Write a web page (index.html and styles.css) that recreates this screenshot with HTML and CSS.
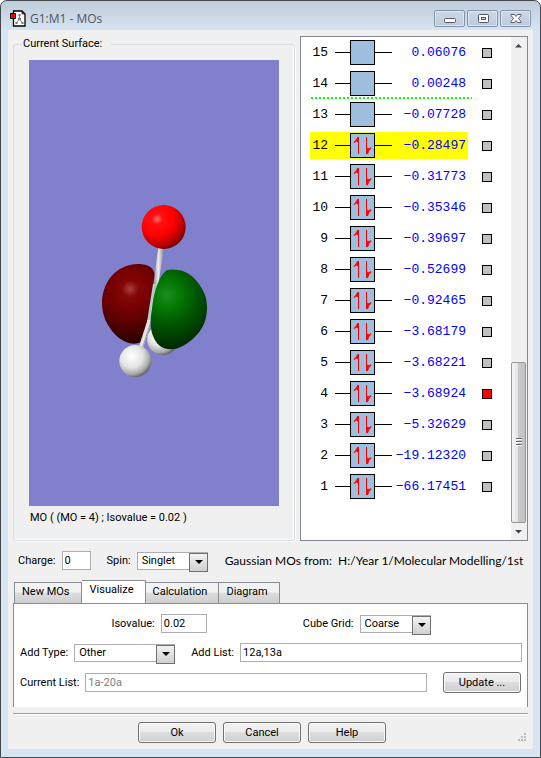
FILE: index.html
```
<!DOCTYPE html>
<html lang="en">
<head>
<meta charset="utf-8">
<title>G1:M1 - MOs</title>
<link rel="stylesheet" href="styles.css">
</head>
<body>
<svg class="defs" aria-hidden="true">
  <symbol id="empty" viewBox="0 0 57 25">
    <path d="M0 12.5h16M40 12.5h17" stroke="#000" fill="none"/>
    <rect x="15.5" y=".5" width="24" height="24" fill="#a0bede" stroke="#000"/>
  </symbol>
  <symbol id="pair" viewBox="0 0 57 25">
    <use href="#empty"/>
    <path d="M23 4h1v17h-1zM31 4h1v17h-1z" fill="red"/>
    <path d="M23 4v5h-1v-1l-2 1-1 1V9l2-2 1-2zM32 21v-6l2 .5 2-1v1l-2 2-1 3z" fill="red" stroke="red" stroke-width=".5"/>
  </symbol>
</svg>
<main class="window">
  <header class="titlebar">
    <svg class="app-icon" width="16" height="17" viewBox="0 0 16 17">
      <path d="M3.500 1H12l3 3v12H3.500z" fill="#fff" stroke="#000" stroke-width="1.300"/>
      <path d="M12 1v3h3z" fill="#e00" stroke="#000" stroke-width=".6"/>
      <path d="M9.500 5v4L6.500 13M9.500 9l3 4" stroke="#888" fill="none"/>
      <path d="M8.500 4h2v2h-2zM8 8h3v2H8zM5.500 12h2v2h-2zM11.500 12h2v2h-2z" fill="#777"/>
      <path d="M.5 3.500h5v5h-5z" fill="red" stroke="#000"/>
    </svg>
    <h1>G1:M1 - MOs</h1>
    <div class="caption-buttons">
      <button aria-label="Minimize"><svg width="30" height="16" viewBox="0 0 30 16"><rect x="9.500" y="8.500" width="11" height="4" rx="1" fill="#fff" stroke="#556"/></svg></button>
      <button aria-label="Maximize"><svg width="30" height="16" viewBox="0 0 30 16"><rect x="10.500" y="4.500" width="10" height="8" rx="1" fill="#fff" stroke="#556"/><rect x="13.500" y="7.500" width="4" height="2" fill="#ccd8e6" stroke="#556"/></svg></button>
      <button aria-label="Close"><svg width="30" height="16" viewBox="0 0 30 16"><path d="M10 4.500h3.500l1.500 2 1.500-2H20v1L17.500 8.500l2.500 3v1h-3.500l-1.500-2-1.500 2H10v-1l2.500-3L10 5.500z" fill="#fff" stroke="#556"/></svg></button>
    </div>
  </header>

  <div class="client">
    <div class="panes">
      <fieldset class="surface">
        <legend>Current Surface:</legend>
        <svg class="scene" viewBox="29 60 250 446" role="img" aria-label="Molecular orbital surface">
          <defs>
            <radialGradient id="ox" cx=".35" cy=".32" r=".75"><stop offset="0" stop-color="#ff7070"/><stop offset=".16" stop-color="#ff1010"/><stop offset=".5" stop-color="#f00"/><stop offset=".8" stop-color="#b80000"/><stop offset="1" stop-color="#600000"/></radialGradient>
            <radialGradient id="hy" cx=".38" cy=".35" r=".7"><stop offset="0" stop-color="#fff"/><stop offset=".5" stop-color="#e4e4e4"/><stop offset=".8" stop-color="#aaa"/><stop offset="1" stop-color="#555"/></radialGradient>
            <radialGradient id="neg" gradientUnits="userSpaceOnUse" cx="130" cy="289" r="52"><stop offset="0" stop-color="#a84242"/><stop offset=".16" stop-color="#850505"/><stop offset=".5" stop-color="#6c0000"/><stop offset="1" stop-color="#300000"/></radialGradient>
            <radialGradient id="pos" gradientUnits="userSpaceOnUse" cx="167" cy="295" r="52"><stop offset="0" stop-color="#1d8c22"/><stop offset=".25" stop-color="#047a04"/><stop offset=".55" stop-color="#005800"/><stop offset="1" stop-color="#002b00"/></radialGradient>
            <linearGradient id="rod"><stop offset="0" stop-color="#777"/><stop offset=".5" stop-color="#eee"/><stop offset="1" stop-color="#888"/></linearGradient>
          </defs>
          <circle cx="162.700" cy="339.500" r="15.500" fill="url(#hy)"/>
          <path d="M138 264C145 264 151 266 153 270C156 275 155 279 154 284L148 319L142 342C139 343 136 344 131 343.500C123 342 115 336 110 328C105 321 102 312 102 303C102 294 105 284 110 278C117 269 127 264 138 264z" fill="url(#neg)"/>
          <path d="M158.500 247h5.500L157.500 290h-5z" fill="url(#rod)"/>
          <path d="M153 284h5L152 322h-5z" fill="#b4cccc"/>
          <path d="M147.500 320h4.500L143 348h-4.500z" fill="#e4e4e4"/>
          <path d="M151 320h1L143 348h-1z" fill="#999"/>
          <path d="M167 270Q172 269 178 270C187 271 194 277 199 284C204 291 207 298 207 307C207 316 205 324 200 331C194 339 185 346 177 348.500Q171 350 165 348.500C160 347 156 343 153.500 337C150 329 150 320 152 309C153 299 155 289 158 283C160 277 163 273 167 270z" fill="url(#pos)"/>
          <circle cx="163.700" cy="227" r="22" fill="url(#ox)"/>
          <circle cx="135.300" cy="361" r="16" fill="url(#hy)"/>
        </svg>
        <p>MO ( (MO = 4) ; Isovalue = 0.02 )</p>
      </fieldset>

      <section class="orbitals">
        <table>
          <tbody>
            <tr><th>15</th><td><svg><use href="#empty"/></svg></td><td class="energy">0.06076</td><td><input type="checkbox" aria-label="Orbital 15"></td></tr>
            <tr class="gap-line"><th>14</th><td><svg><use href="#empty"/></svg></td><td class="energy">0.00248</td><td><input type="checkbox" aria-label="Orbital 14"></td></tr>
            <tr><th>13</th><td><svg><use href="#empty"/></svg></td><td class="energy">−0.07728</td><td><input type="checkbox" aria-label="Orbital 13"></td></tr>
            <tr class="selected"><th>12</th><td><svg><use href="#pair"/></svg></td><td class="energy">−0.28497</td><td><input type="checkbox" aria-label="Orbital 12"></td></tr>
            <tr><th>11</th><td><svg><use href="#pair"/></svg></td><td class="energy">−0.31773</td><td><input type="checkbox" aria-label="Orbital 11"></td></tr>
            <tr><th>10</th><td><svg><use href="#pair"/></svg></td><td class="energy">−0.35346</td><td><input type="checkbox" aria-label="Orbital 10"></td></tr>
            <tr><th>9</th><td><svg><use href="#pair"/></svg></td><td class="energy">−0.39697</td><td><input type="checkbox" aria-label="Orbital 9"></td></tr>
            <tr><th>8</th><td><svg><use href="#pair"/></svg></td><td class="energy">−0.52699</td><td><input type="checkbox" aria-label="Orbital 8"></td></tr>
            <tr><th>7</th><td><svg><use href="#pair"/></svg></td><td class="energy">−0.92465</td><td><input type="checkbox" aria-label="Orbital 7"></td></tr>
            <tr><th>6</th><td><svg><use href="#pair"/></svg></td><td class="energy">−3.68179</td><td><input type="checkbox" aria-label="Orbital 6"></td></tr>
            <tr><th>5</th><td><svg><use href="#pair"/></svg></td><td class="energy">−3.68221</td><td><input type="checkbox" aria-label="Orbital 5"></td></tr>
            <tr><th>4</th><td><svg><use href="#pair"/></svg></td><td class="energy">−3.68924</td><td><input type="checkbox" aria-label="Orbital 4" checked></td></tr>
            <tr><th>3</th><td><svg><use href="#pair"/></svg></td><td class="energy">−5.32629</td><td><input type="checkbox" aria-label="Orbital 3"></td></tr>
            <tr><th>2</th><td><svg><use href="#pair"/></svg></td><td class="energy">−19.12320</td><td><input type="checkbox" aria-label="Orbital 2"></td></tr>
            <tr><th>1</th><td><svg><use href="#pair"/></svg></td><td class="energy">−66.17451</td><td><input type="checkbox" aria-label="Orbital 1"></td></tr>
          </tbody>
        </table>
        <div class="scrollbar">
          <svg width="15" height="17" viewBox="0 0 15 17"><path d="M4 10.500L7.500 7 11 10.500z" fill="#444"/></svg>
          <div class="track"></div>
          <div class="thumb"><i></i></div>
          <svg width="15" height="17" viewBox="0 0 15 17"><path d="M4 7L7.500 10.500 11 7z" fill="#444"/></svg>
        </div>
      </section>
    </div>

    <div class="row status">
      <label for="charge">Charge:</label>
      <input id="charge" class="field charge" type="text" value="0">
      <label for="spin" class="spin-label">Spin:</label>
      <span class="combo"><select id="spin"><option>Singlet</option></select></span>
      <span class="source">Gaussian MOs from:&nbsp; H:/Year 1/Molecular Modelling/1st</span>
    </div>

    <nav class="tabs" role="tablist">
      <button role="tab">New MOs</button>
      <button role="tab" class="active" aria-selected="true">Visualize</button>
      <button role="tab">Calculation</button>
      <button role="tab">Diagram</button>
    </nav>
    <section class="page">
      <div class="row centered">
        <label for="iso">Isovalue:</label>
        <input id="iso" class="field iso" type="text" value="0.02">
        <label for="grid" class="grid-label">Cube Grid:</label>
        <span class="combo"><select id="grid"><option>Coarse</option></select></span>
      </div>
      <div class="row">
        <label for="type">Add Type:</label>
        <span class="combo wide"><select id="type"><option>Other</option></select></span>
        <label for="list" class="list-label">Add List:</label>
        <input id="list" class="field grow" type="text" value="12a,13a">
      </div>
      <div class="row">
        <label for="current">Current List:</label>
        <input id="current" class="field grow" type="text" value="1a-20a" disabled>
        <button class="push update">Update ...</button>
      </div>
    </section>

    <footer>
      <button class="push">Ok</button>
      <button class="push">Cancel</button>
      <button class="push">Help</button>
      <svg class="grip" width="9" height="9" viewBox="0 0 9 9"><path d="M7 0h2v2H7zM7 3h2v2H7zM4 3h2v2H4zM7 6h2v2H7zM4 6h2v2H4zM1 6h2v2H1z" fill="#bbb"/></svg>
    </footer>
  </div>
</main>
</body>
</html>
```
FILE: styles.css
```
* { box-sizing: border-box; }
body {
  margin: 0;
  background: #fff;
  color: #000;
  font: 11px/16px Roboto, sans-serif;
}
button, input, select { font: inherit; color: inherit; margin: 0; }
.defs { position: absolute; width: 0; height: 0; }

.window {
  display: flex;
  flex-direction: column;
  min-height: 100vh;
  padding: 0 7px 8px;
  border: 1px solid #45494f;
  border-radius: 7px 7px 0 0;
  background: linear-gradient(#bfcddb, #d7e4f2 30px);
}
.titlebar {
  display: flex;
  align-items: center;
  height: 29px;
  padding: 6px 2px 0;
}
.titlebar h1 {
  flex: 1;
  margin: 0 0 0 4px;
  color: #4c5560;
  font: 12px/16px "Open Sans", sans-serif;
}
.caption-buttons { display: flex; gap: 2px; }
.caption-buttons button {
  width: 31px;
  height: 17px;
  padding: 0;
  border: 1px solid #8393ad;
  border-radius: 2px;
  background: linear-gradient(#cbd8e6, #bccbdc);
  box-shadow: inset 0 0 0 1px #dde7f1;
}
.caption-buttons svg { display: block; margin: -1px 0 0; }

.client {
  display: flex;
  flex: 1;
  flex-direction: column;
  padding: 6px 5px 0;
  background: #f0f0f0;
}
.panes { display: grid; grid-template-columns: 1fr 228px; gap: 5px; }
.surface {
  min-width: 0;
  margin: 0;
  padding: 8px 15px 14px;
  border: 1px solid #d5dfe5;
  border-radius: 3px;
  box-shadow: inset -1px -1px #fff, 1px 1px #fff;
}
.surface legend { margin-left: -8px; padding: 0 9px 0 2px; }
.scene { display: block; width: 100%; background: #8080cc; }
.surface p { margin: 4px 0 0 1px; }

.orbitals {
  display: flex;
  justify-content: space-between;
  border: 1px solid #828790;
  background: #fff;
  font: 13px/16px "Liberation Mono", monospace;
}
.orbitals table { align-self: flex-start; margin-left: 9px; border-spacing: 0; }
.orbitals tr { height: 31px; }
.orbitals th, .orbitals td { padding: 0; font-weight: normal; text-align: right; }
.orbitals th { width: 18px; }
.orbitals td:nth-child(2) { width: 64px; }
.orbitals td:last-child { width: 24px; }
.orbitals td svg { display: block; width: 57px; height: 25px; margin-left: 7px; }
.orbitals .energy { width: 76px; padding-right: 2px; color: #00f; }
.orbitals input {
  display: block;
  width: 10px;
  height: 10px;
  margin-left: 14px;
  appearance: none;
  border: 1px solid #000;
  background: #c0c0c0;
}
.orbitals input:checked { background: #f00; }
.gap-line {
  background: repeating-linear-gradient(90deg, #0f0 0 2px, transparent 2px 4px) 1px 100% / 161px 2px no-repeat;
}
.selected > :not(:last-child) { background: linear-gradient(#ff0, #ff0) center / 100% 27px no-repeat; }

.scrollbar { display: flex; flex-direction: column; width: 16px; background: #f0f0f0; }
.scrollbar svg { flex: none; }
.track { flex: 309; }
.thumb {
  display: flex;
  flex: 160;
  align-items: center;
  justify-content: center;
  width: 15px;
  border: 1px solid #979797;
  border-radius: 2px;
  background: linear-gradient(90deg, #f5f5f5, #e4e4e6 45%, #c8c9cb 50%, #c0c1c4);
}
.thumb i { width: 6px; height: 9px; background: repeating-linear-gradient(#666 0 1px, #fff 1px 2px, transparent 2px 3px); }

.row { display: flex; align-items: center; gap: 6px; }
.field {
  width: 29px;
  height: 19px;
  padding: 0 2px;
  border: 1px solid #abadb3;
  border-radius: 0;
  background: #fff;
}
.field:disabled { color: #808080; }
.iso { width: 46px; }
.grow { flex: 1; min-width: 0; }
.combo { position: relative; flex: none; width: 71px; height: 18px; }
.wide { width: 101px; }
.combo select {
  display: block;
  width: 100%;
  height: 18px;
  padding: 0 0 1px 4px;
  appearance: none;
  border: 1px solid #abadb3;
  border-radius: 0;
  background: #fff;
}
.combo::before {
  content: "";
  position: absolute;
  top: 1px;
  right: 0;
  width: 17px;
  height: 17px;
  border: 1px solid #707070;
  background: linear-gradient(#f2f2f2, #d0d0d0);
  pointer-events: none;
}
.combo::after {
  content: "";
  position: absolute;
  top: 8px;
  right: 5px;
  border: 4px solid transparent;
  border-top-color: #000;
  border-bottom: 0;
  pointer-events: none;
}
.status { margin: 10px 0 0 5px; white-space: nowrap; }
.spin-label { margin-left: 10px; }
.source { margin-left: 11px; font: 12px/16px Lato, sans-serif; }

.tabs { display: flex; align-items: flex-end; height: 24px; margin: 10px 0 -1px 1px; }
.tabs button {
  height: 22px;
  padding: 0 11px 2px 7px;
  border: 1px solid #898c95;
  border-left-width: 0;
  background: linear-gradient(#f2f2f2 45%, #ddd 50%, #cfcfcf);
}
.tabs button:first-child { border-left-width: 1px; }
.tabs .active {
  height: 24px;
  padding: 0 11px 4px 8px;
  border-bottom-color: #fff;
  background: #fff;
}
.page {
  display: flex;
  flex-direction: column;
  gap: 10px;
  padding: 10px 5px 14px 6px;
  border: 1px solid #898c95;
  border-bottom: 0;
  background: #fff;
}
.centered { justify-content: center; }
.grid-label { margin-left: 90px; }
.list-label { margin-left: 10px; }
.push {
  width: 78px;
  height: 21px;
  padding: 0;
  border: 1px solid #707070;
  border-radius: 3px;
  background: linear-gradient(#f2f2f2, #ebebeb 48%, #ddd 50%, #cfcfcf);
  box-shadow: inset 0 0 0 1px #fbfbfb;
}
.update { margin: 0 1px 0 10px; }
footer {
  display: flex;
  justify-content: center;
  gap: 7px;
  position: relative;
  margin-top: 6px;
  padding: 8px 17px 6px 0;
  border-top: 1px solid #a0a0a0;
  box-shadow: inset 0 1px #fff;
}
.grip { position: absolute; right: 2px; bottom: 7px; }
```
